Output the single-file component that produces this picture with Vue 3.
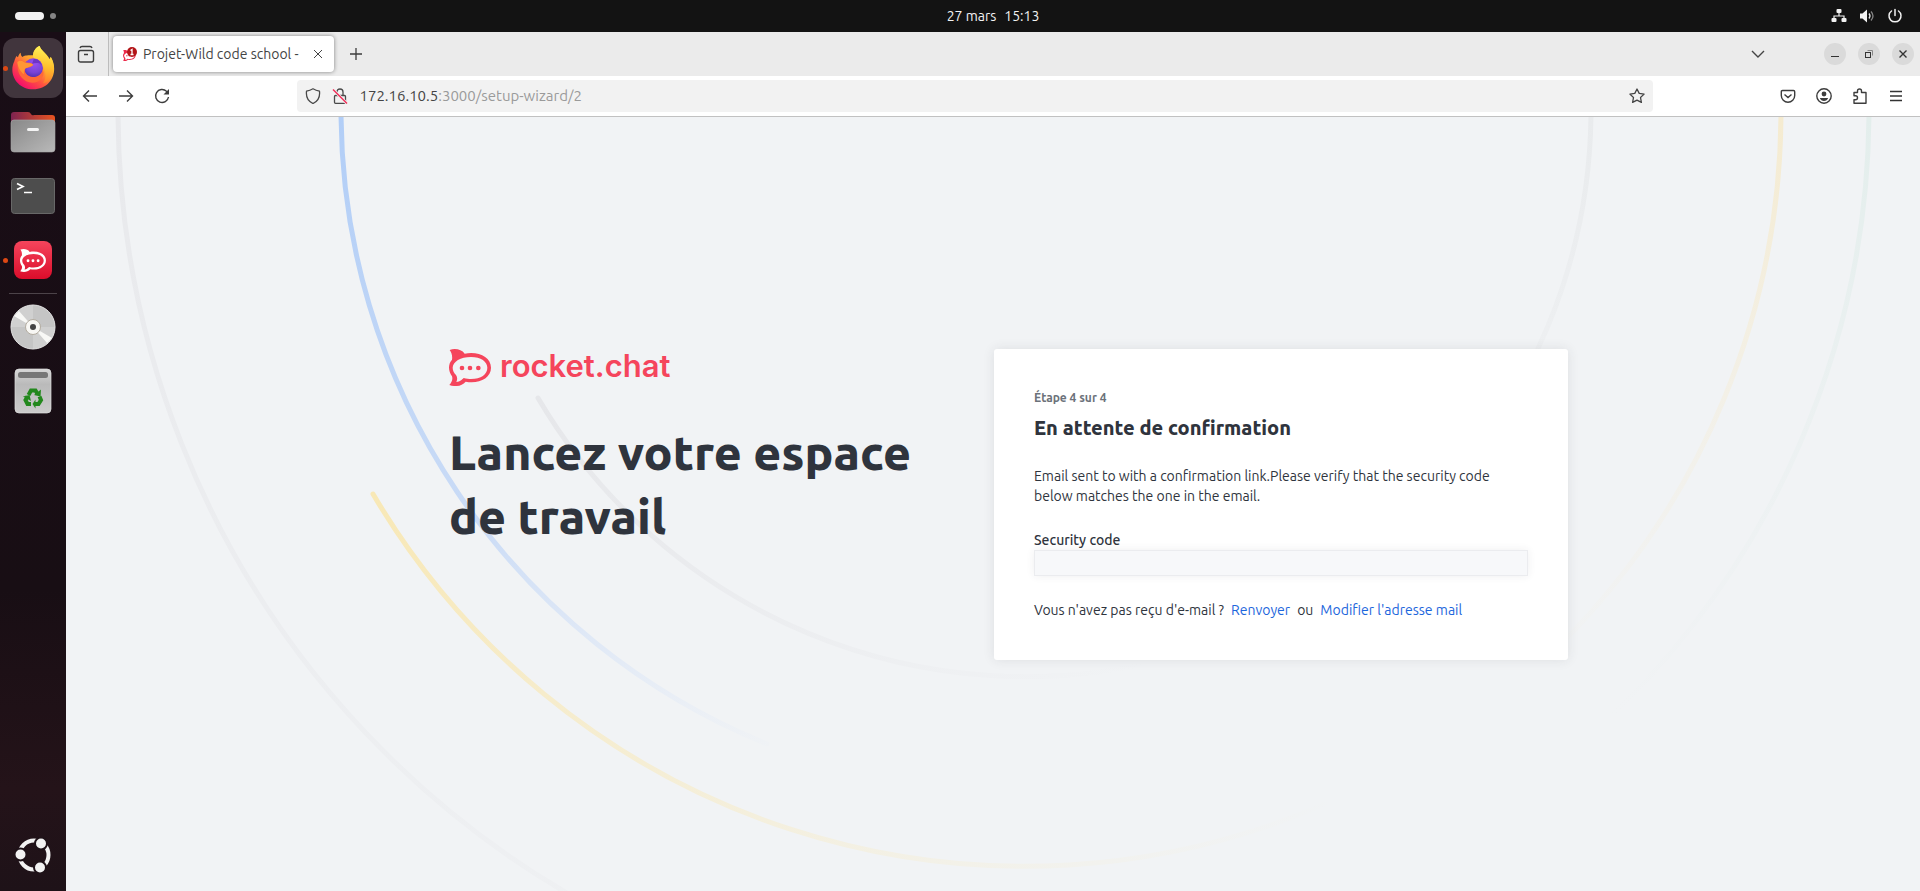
<script setup>
import { ref } from 'vue'

const code = ref('')
const rocketMark =
  'M2 3C18-3 38 1 47 14C88 6 126 24 126 56C126 88 88 106 50 98C38 112 18 114 1 108C8 100 12 92 9 82C-3 66-3 44 9 32C11 20 7 10 2 3Z' +
  'M66 24C34 24 12 38 11 56C11 64 15 72 21 78C25 84 26 92 22 99C34 98 38 92 44 87C52 89 60 90 66 90C96 90 115 76 115 56C115 38 96 24 66 24Z' +
  'M32 57a7 7 0 1 0 14 0a7 7 0 1 0-14 0ZM56 57a7 7 0 1 0 14 0a7 7 0 1 0-14 0ZM81 57a7 7 0 1 0 14 0a7 7 0 1 0-14 0Z'
</script>

<template>
  <div class="desktop">
    <header class="topbar">
      <button class="workspaces" aria-label="Activités"><span class="pill"></span><span class="dot"></span></button>
      <button class="clock"><span>27 mars</span><span>15:13</span></button>
      <button class="system" aria-label="Système">
        <svg width="16" height="16" viewBox="0 0 16 16" fill="#f2f2f2"><rect x="5.500" y="1" width="5" height="4" rx="1" /><rect x="0.500" y="10" width="5" height="4" rx="1" /><rect x="10.500" y="10" width="5" height="4" rx="1" /><path d="M8 4v4M3 11V8h10v3" fill="none" stroke="#f2f2f2" stroke-width="1.200" /></svg>
        <svg width="16" height="16" viewBox="0 0 16 16"><path d="M1 5.500h2.500L8 1.500v13L3.500 10.500H1Z" fill="#f2f2f2" /><path d="M10 5.500q2 2.500 0 5" stroke="#e5e5e5" stroke-width="1.300" fill="none" /><path d="M12 3.500q4 4.500 0 9" stroke="#858585" stroke-width="1.300" fill="none" /></svg>
        <svg width="16" height="16" viewBox="0 0 16 16" fill="none" stroke="#f2f2f2" stroke-width="1.500" stroke-linecap="round"><path d="M4.500 3A6 6 0 1 0 11.500 3M8 1.500v6" /></svg>
      </button>
    </header>

    <div class="workarea">
      <nav class="dock" aria-label="Dock">
        <button class="app running active" aria-label="Firefox">
          <svg width="44" height="46" viewBox="0 0 132 138">
            <defs>
              <linearGradient id="flame" x1="0.850" y1="0.100" x2="0.200" y2="0.950"><stop offset="0" stop-color="#ffe63f" /><stop offset="0.350" stop-color="#ffae2c" /><stop offset="0.650" stop-color="#ff5340" /><stop offset="1" stop-color="#f3086f" /></linearGradient>
              <linearGradient id="mane" x1="0.600" y1="0" x2="0.500" y2="1"><stop offset="0" stop-color="#fff55a" /><stop offset="0.550" stop-color="#ffc02d" /><stop offset="1" stop-color="#ff7b2d" /></linearGradient>
              <radialGradient id="globe" cx="0.550" cy="0.250" r="0.800"><stop offset="0" stop-color="#9a50f2" /><stop offset="0.600" stop-color="#7a43d6" /><stop offset="1" stop-color="#4b2ca6" /></radialGradient>
            </defs>
            <path d="M21 37C22 31 25 26 29 23C29 30 32 35 35 36C40 29 66 31 66 31C67 17 75 7 86 3C88 14 105 23 116 42C118 40 119 38 119 35C143 72 126 132 66 133C19 133-9 87 10 49C11 42 15 36 16 33Z" fill="url(#flame)" />
            <path d="M66 31C67 17 75 7 86 3C88 16 108 27 116 46L119 35C141 75 120 111 96 115C111 93 102 63 82 49C72 42 65 38 66 31Z" fill="url(#mane)" />
            <circle cx="67" cy="69" r="29" fill="url(#globe)" />
            <path d="M68 43C79 39 91 49 92 62C86 51 74 54 63 56Z" fill="#6f35c5" />
            <path d="M20 47C29 44 37 47 43 52C52 54 60 52 66 59C63 67 51 67 43 70C38 83 49 95 65 96C80 97 91 88 96 75C103 96 86 113 64 113C37 113 20 88 20 67Z" fill="#ff6938" />
            <path d="M19 51C29 44 36 49 42 53C52 54 61 53 67 59C60 66 51 65 44 70C38 75 38 82 39 88C28 79 20 66 19 51Z" fill="#ff9735" />
          </svg>
        </button>
        <button class="app" aria-label="Fichiers">
          <svg width="46" height="42" viewBox="0 0 46 42"><defs><linearGradient id="folder-back"><stop offset="0" stop-color="#7d2350" /><stop offset="1" stop-color="#e95420" /></linearGradient><linearGradient id="folder-front" x2="1" y2="1"><stop offset="0" stop-color="#888" /><stop offset="1" stop-color="#b9b9b9" /></linearGradient></defs><path d="M1 14V4Q1 1 4 1h14q2 0 3 2t3 1h18q3 0 3 3v9Z" fill="url(#folder-back)" /><rect x="1" y="9" width="44" height="32" rx="3" fill="url(#folder-front)" stroke="#aaa" stroke-width="0.600" /><rect x="17" y="17" width="12" height="3" rx="1.500" fill="#f4f4f4" /></svg>
        </button>
        <button class="app" aria-label="Terminal">
          <svg width="44" height="36" viewBox="0 0 44 36"><rect x="0.500" y="0.500" width="43" height="35" rx="3" fill="#4d4d4d" stroke="#686868" /><path d="M6 5.500L12 8.500L6 11.500M13 14.500h8" fill="none" stroke="#fff" stroke-width="1.700" /></svg>
        </button>
        <button class="app running" aria-label="Rocket.Chat">
          <svg width="38" height="38" viewBox="0 0 38 38"><defs><linearGradient id="rocket-tile" x2="0" y2="1"><stop offset="0" stop-color="#f5455c" /><stop offset="1" stop-color="#db0d2b" /></linearGradient></defs><rect width="38" height="38" rx="8" fill="url(#rocket-tile)" /><path transform="translate(6 8) scale(0.206)" :d="rocketMark" fill="#fff" fill-rule="evenodd" /></svg>
        </button>
        <hr class="divider" />
        <button class="app" aria-label="Disque">
          <svg width="46" height="46" viewBox="0 0 46 46"><circle cx="23" cy="23" r="22" fill="#d0d0d0" stroke="#e7e7e7" /><path d="M23 23V1.500A21.500 21.500 0 0 1 44.500 23ZM23 23v21.500A21.500 21.500 0 0 1 1.500 23Z" fill="#c5c5c5" /><path d="M23 23L4 12L9 7ZM23 23l19 11l-5 5Z" fill="#f8f8f6" /><circle cx="23" cy="23" r="7.500" fill="#f8f7f4" stroke="#b3aca0" /><circle cx="23" cy="23" r="3" fill="#444" /></svg>
        </button>
        <button class="app" aria-label="Corbeille">
          <svg width="38" height="46" viewBox="0 0 38 46"><defs><linearGradient id="bin" x2="0" y2="1"><stop offset="0" stop-color="#d7d7d7" /><stop offset="0.350" stop-color="#bababa" /><stop offset="1" stop-color="#cbcbcb" /></linearGradient></defs><rect x="1" y="1" width="36" height="44" rx="4" fill="url(#bin)" stroke="#e0e0e0" stroke-width="0.700" /><rect x="4" y="4" width="30" height="6" rx="2.500" fill="#777" /><g fill="none" stroke="#23881d" stroke-width="4"><path d="M14.500 27L17 22.500h4.500L23.500 26" /><path d="M25.500 28.500L27 32l-2.500 4H20" /><path d="M17 36h-3.500L11.500 32l2-3.500" /></g><g fill="#23881d"><path d="M20 27l6.500 1.500L27 21.500Z" /><path d="M21.500 31.500L18.500 36l3 4.500Z" /><path d="M9 28.500l6.500-1.500l1.500 6Z" /></g></svg>
        </button>
        <button class="app launcher" aria-label="Afficher les applications">
          <svg width="36" height="36" viewBox="0 0 36 36"><circle cx="19" cy="18" r="14.500" fill="none" stroke="#f2f2f2" stroke-width="4" /><g fill="#f2f2f2" stroke="#1e1218" stroke-width="2"><circle cx="5.500" cy="17.500" r="6" /><circle cx="26" cy="6.500" r="6" /><circle cx="25" cy="30.500" r="6" /></g></svg>
        </button>
      </nav>

      <section class="browser" aria-label="Navigateur">
        <div class="tabs">
          <button class="view" aria-label="Vue des onglets"><svg width="18" height="18" viewBox="0 0 18 18" fill="none" stroke="#3d3d3d" stroke-width="1.400"><rect x="1.500" y="5.500" width="15" height="11.500" rx="2" /><path d="M3 3q.5-1.500 2-1.500h8q1.500 0 2 1.500M7 9.500h4" /></svg></button>
          <div class="tab">
            <svg width="14" height="14" viewBox="0 0 14 14"><path transform="translate(0 3) scale(0.100)" :d="rocketMark" fill="#ec2b4b" fill-rule="evenodd" /><circle cx="9" cy="5" r="5" fill="#b31518" /><path d="M7.500 3.500L9 2.500v5M7.500 7.500h3" fill="none" stroke="#fff" stroke-width="1.300" /></svg>
            <span class="name">Projet-Wild code school -</span>
            <button class="close" aria-label="Fermer l'onglet"><svg width="10" height="10" viewBox="0 0 10 10" stroke="#444" stroke-width="1"><path d="M1 1l8 8M9 1L1 9" /></svg></button>
          </div>
          <button class="new" aria-label="Nouvel onglet"><svg width="12" height="12" viewBox="0 0 12 12" stroke="#3c3c3c" stroke-width="1.300"><path d="M6 0v12M0 6h12" /></svg></button>
          <button class="list" aria-label="Lister les onglets"><svg width="14" height="8" viewBox="0 0 14 8" fill="none" stroke="#444" stroke-width="1.400"><path d="M1 1l6 6l6-6" /></svg></button>
          <div class="controls">
            <button aria-label="Réduire"><svg width="10" height="10" viewBox="0 0 10 10" stroke="#333"><path d="M1 7.500h8" /></svg></button>
            <button aria-label="Restaurer"><svg width="10" height="10" viewBox="0 0 10 10" fill="none" stroke="#333"><rect x="1.500" y="3.500" width="5" height="5" /><path d="M3.500 1.500h5v5" stroke="#888" /></svg></button>
            <button aria-label="Fermer"><svg width="10" height="10" viewBox="0 0 10 10" stroke="#333" stroke-width="1.400"><path d="M1.500 1.500l7 7M8.500 1.500l-7 7" /></svg></button>
          </div>
        </div>

        <div class="toolbar">
          <button class="tool" aria-label="Précédent"><svg width="16" height="16" viewBox="0 0 16 16" fill="none" stroke="#3d3d3d" stroke-width="1.400"><path d="M15 8H1.500M7 2.500L1.500 8L7 13.500" /></svg></button>
          <button class="tool" aria-label="Suivant"><svg width="16" height="16" viewBox="0 0 16 16" fill="none" stroke="#3d3d3d" stroke-width="1.400"><path d="M1 8h13.500M9 2.500L14.500 8L9 13.500" /></svg></button>
          <button class="tool" aria-label="Actualiser"><svg width="16" height="16" viewBox="0 0 16 16" fill="none" stroke="#3d3d3d" stroke-width="1.400"><path d="M14.500 9A6.500 6.500 0 1 1 12.500 3.200L14 4.500" /><path d="M15 1v5.500H9.500Z" fill="#3d3d3d" stroke="none" /></svg></button>
          <div class="space"></div>
          <div class="address">
            <svg width="16" height="16" viewBox="0 0 16 16" fill="none" stroke="#4a4a4a" stroke-width="1.300"><path d="M8 .8Q11 2.500 14.500 3.200Q15.500 12 8 15.500Q.5 12 1.500 3.200Q5 2.500 8 .8Z" stroke-linejoin="round" /></svg>
            <svg width="16" height="16" viewBox="0 0 16 16" fill="none" stroke="#4a4a4a" stroke-width="1.300"><rect x="2.500" y="7.500" width="11" height="7.800" rx="1" /><path d="M5 7.500V4Q5 1 8 1t3 3v3.500" /><path d="M1 1.500l14 14" stroke="#f2f2f2" stroke-width="3" /><path d="M1 1.500l14 14" stroke="#f22c57" stroke-width="1.400" /></svg>
            <a class="url" href="#"><b>172.16.10.5</b>:3000/setup-wizard/2</a>
            <button class="star" aria-label="Marquer cette page"><svg width="16" height="16" viewBox="0 0 16 16" fill="none" stroke="#444" stroke-width="1.300" stroke-linejoin="round"><path d="M8 1l2.200 4.400l4.900.7l-3.600 3.400l.9 4.900L8 12.100l-4.400 2.300l.9-4.900L.9 6.100l4.900-.7Z" /></svg></button>
          </div>
          <div class="space"></div>
          <button class="tool" aria-label="Pocket"><svg width="16" height="16" viewBox="0 0 16 16" fill="none" stroke="#3d3d3d" stroke-width="1.400"><path d="M2.500 2.500h11q1.200 0 1.200 1.200V7.500a6.700 6.700 0 0 1-13.400 0V3.700Q1.300 2.500 2.500 2.500ZM4.500 6.500L8 9.500l3.500-3" /></svg></button>
          <button class="tool" aria-label="Compte"><svg width="16" height="16" viewBox="0 0 16 16"><circle cx="8" cy="8" r="7.200" fill="none" stroke="#3d3d3d" stroke-width="1.400" /><circle cx="8" cy="6" r="2.400" fill="#3d3d3d" /><path d="M3.800 10h8.400q-1.200 3-4.200 3t-4.200-3Z" fill="#3d3d3d" /></svg></button>
          <button class="tool" aria-label="Extensions"><svg width="16" height="16" viewBox="0 0 16 16" fill="none" stroke="#3d3d3d" stroke-width="1.400" stroke-linejoin="round"><path d="M2 4.500h3.500V3q0-2 2-2t2 2v1.500H14v10.800H2v-3.500h1.500q2 0 2-2t-2-2H2Z" /></svg></button>
          <button class="tool" aria-label="Menu"><svg width="12" height="12" viewBox="0 0 12 12" stroke="#333" stroke-width="1.300"><path d="M0 1.500h12M0 6h12M0 10.500h12" /></svg></button>
        </div>

        <main class="page">
          <svg class="arcs" viewBox="0 0 1854 774" preserveAspectRatio="xMidYMid slice" fill="none" stroke-width="5" stroke-linecap="round" aria-hidden="true">
            <defs>
              <linearGradient id="arc-outer" gradientUnits="userSpaceOnUse" x1="0" y1="0" x2="0" y2="1100"><stop offset="0" stop-color="#e8e9ec" /><stop offset="1" stop-color="#e8e9ec" stop-opacity="0" /></linearGradient>
              <linearGradient id="arc-blue" gradientUnits="userSpaceOnUse" x1="275" y1="0" x2="640" y2="690"><stop offset="0" stop-color="#b2cef7" /><stop offset="0.550" stop-color="#cbdcf6" /><stop offset="1" stop-color="#dfe8f8" stop-opacity="0" /></linearGradient>
              <linearGradient id="arc-yellow" gradientUnits="userSpaceOnUse" x1="307" y1="377" x2="1220" y2="800"><stop offset="0" stop-color="#f8e8b6" /><stop offset="1" stop-color="#f6efd8" stop-opacity="0" /></linearGradient>
              <linearGradient id="arc-inner" gradientUnits="userSpaceOnUse" x1="472" y1="281" x2="1070" y2="570"><stop offset="0" stop-color="#e6e7ea" /><stop offset="1" stop-color="#e9eaed" stop-opacity="0" /></linearGradient>
              <linearGradient id="arc-grey-right" gradientUnits="userSpaceOnUse" x1="0" y1="0" x2="0" y2="420"><stop offset="0" stop-color="#e9ebed" /><stop offset="1" stop-color="#e9ebed" stop-opacity="0" /></linearGradient>
              <linearGradient id="arc-yellow-right" gradientUnits="userSpaceOnUse" x1="0" y1="0" x2="0" y2="560"><stop offset="0" stop-color="#f5ebd0" /><stop offset="1" stop-color="#f4efe2" stop-opacity="0" /></linearGradient>
              <linearGradient id="arc-green" gradientUnits="userSpaceOnUse" x1="0" y1="0" x2="0" y2="600"><stop offset="0" stop-color="#e3eeec" /><stop offset="1" stop-color="#e9efef" stop-opacity="0" /></linearGradient>
            </defs>
            <path d="M52-7A907 907 0 0 0 959 900" stroke="url(#arc-outer)" />
            <path d="M275-7A684 684 0 0 0 701 627" stroke="url(#arc-blue)" />
            <path d="M307 377A756 756 0 0 0 1259 687" stroke="url(#arc-yellow)" />
            <path d="M472 281A566 566 0 0 0 1100 542" stroke="url(#arc-inner)" />
            <path d="M1525-7A566 566 0 0 1 1359 393" stroke="url(#arc-grey-right)" />
            <path d="M1715-7A756 756 0 0 1 1494 528" stroke="url(#arc-yellow-right)" />
            <path d="M1803-7A844 844 0 0 1 1536 608" stroke="url(#arc-green)" />
          </svg>

          <div class="wizard">
            <div class="hero">
              <div class="brand">
                <svg width="42" height="37" viewBox="0 0 126 111" fill="#f5455c" fill-rule="evenodd" aria-hidden="true"><path :d="rocketMark" /></svg>
                <span>rocket.chat</span>
              </div>
              <h1>Lancez votre espace<br />de travail</h1>
            </div>
            <form class="card" @submit.prevent>
              <p class="step">Étape 4 sur 4</p>
              <h2>En attente de confirmation</h2>
              <p class="message">Email sent to with a confirmation link.Please verify that the security code<br />below matches the one in the email.</p>
              <label for="security-code">Security code</label>
              <input id="security-code" v-model="code" type="text" readonly />
              <p class="resend"><span>Vous n'avez pas reçu d'e-mail ?</span><a href="#">Renvoyer</a><span>ou</span><a href="#">Modifier l'adresse mail</a></p>
            </form>
          </div>
        </main>
      </section>
    </div>
  </div>
</template>

<style>
html,
body {
  margin: 0;
  background: #f1f3f5;
}
</style>

<style scoped>
.desktop {
  min-height: 100vh;
  display: flex;
  flex-direction: column;
  font-family: Ubuntu, "Noto Sans", sans-serif;
  color: #2f343d;
}
.desktop * {
  box-sizing: border-box;
}
button {
  padding: 0;
  border: 0;
  background: none;
  color: inherit;
  font: inherit;
  display: flex;
  align-items: center;
  justify-content: center;
}
svg {
  display: block;
  flex: none;
}
a {
  text-decoration: none;
}
.topbar {
  height: 32px;
  background: #131313;
  color: #f2f2f2;
  display: grid;
  grid-template-columns: 66px 1fr 1fr 1fr;
  align-items: center;
  font-size: 14px;
  line-height: 16px;
}
.workspaces {
  gap: 6px;
  justify-content: flex-start;
  padding-left: 15px;
}
.pill {
  width: 29px;
  height: 8px;
  border-radius: 4px;
  background: #f2f2f2;
}
.dot {
  width: 6px;
  height: 6px;
  border-radius: 50%;
  background: #858585;
}
.clock {
  grid-column: 3;
  justify-self: center;
  gap: 8px;
}
.system {
  justify-self: end;
  gap: 12px;
  padding-right: 17px;
}
.workarea {
  flex: 1;
  display: flex;
}
.dock {
  width: 66px;
  padding-top: 4px;
  display: flex;
  flex-direction: column;
  background: linear-gradient(#190d16, #180e14 65%, #241319 88%, #1e1218);
}
.app {
  position: relative;
  height: 64px;
}
.active::before {
  content: "";
  position: absolute;
  inset: 2px 3px;
  border-radius: 12px;
  background: #41353d;
}
.active svg {
  position: relative;
}
.running::after {
  content: "";
  position: absolute;
  left: 3px;
  top: 30px;
  width: 5px;
  height: 5px;
  border-radius: 50%;
  background: #dd4814;
}
.divider {
  width: 48px;
  height: 1px;
  margin: 1px auto;
  border: 0;
  background: #4c4349;
}
.launcher {
  margin-top: auto;
  height: 72px;
}
.browser {
  flex: 1;
  min-width: 0;
  display: flex;
  flex-direction: column;
}
.tabs {
  height: 44px;
  padding-right: 6px;
  background: #ebebeb;
  display: flex;
  align-items: center;
}
.view {
  width: 43px;
  height: 44px;
  padding-right: 2px;
  border-right: 1px solid #bdbdbd;
}
.tab {
  width: 221px;
  height: 36px;
  margin-left: 4px;
  padding: 0 10px;
  display: flex;
  align-items: center;
  border-radius: 4px;
  background: #fff;
  box-shadow: 0 0 4px rgba(0, 0, 0, 0.45);
  color: #444;
}
.name {
  flex: 1;
  margin-left: 6px;
  font-size: 14px;
  line-height: 20px;
  white-space: nowrap;
  overflow: hidden;
}
.close {
  width: 12px;
  height: 20px;
}
.new {
  width: 36px;
  height: 36px;
  margin-left: 4px;
}
.list {
  width: 36px;
  height: 36px;
  margin-left: auto;
}
.controls {
  display: flex;
  gap: 12px;
  margin-left: 48px;
}
.controls button {
  width: 22px;
  height: 22px;
  border-radius: 50%;
  background: #dadada;
}
.toolbar {
  height: 41px;
  padding: 0 6px;
  background: #fff;
  border-bottom: 1px solid #c1c1c1;
  display: flex;
  align-items: center;
}
.tool {
  width: 36px;
  height: 32px;
}
.space {
  flex: 5;
}
.address {
  flex: 57;
  height: 32px;
  padding: 0 8px;
  display: flex;
  align-items: center;
  gap: 11px;
  border-radius: 4px;
  background: #f2f2f2;
}
.url {
  flex: 1;
  color: #9a9a9a;
  font-size: 15px;
  line-height: 16px;
}
.url b {
  font-weight: 400;
  color: #444;
}
.page {
  position: relative;
  flex: 1;
  display: flex;
  align-items: center;
  justify-content: center;
  background: #f1f3f5;
}
.arcs {
  position: absolute;
  inset: 0;
  width: 100%;
  height: 100%;
}
.wizard {
  position: relative;
  width: 100%;
  max-width: 1150px;
  padding-left: 31px;
  display: grid;
  grid-template-columns: 1fr 574px;
}
.brand {
  height: 37px;
  display: flex;
  align-items: flex-start;
  gap: 9px;
  color: #f5455c;
  font: 600 31px/34px Inter, sans-serif;
}
h1 {
  margin: 34px 0 0;
  font-size: 48px;
  line-height: 64px;
  font-weight: 800;
  white-space: nowrap;
}
.card {
  padding: 40px;
  border-radius: 3px;
  background: #fff;
  box-shadow: 0 0 12px rgba(47, 52, 61, 0.1);
  font-size: 14px;
  line-height: 20px;
}
.card p {
  margin: 0;
}
.card .step {
  font-size: 12px;
  line-height: 18px;
  font-weight: 600;
  color: #6c727a;
}
h2 {
  margin: 7px 0 24px;
  font-size: 20px;
  line-height: 28px;
  font-weight: 800;
}
.message {
  white-space: nowrap;
}
label {
  display: block;
  margin-top: 24px;
  font-weight: 500;
}
input {
  display: block;
  width: 100%;
  height: 26px;
  padding: 0 8px;
  border: 1px solid #ebecef;
  border-radius: 0;
  outline: 0;
  background: #f7f8fa;
  box-shadow: 0 0 8px rgba(47, 52, 61, 0.08);
  font: inherit;
}
.card .resend {
  margin-top: 24px;
  display: flex;
  gap: 7px;
}
.resend a {
  color: #1d66dc;
}
</style>
